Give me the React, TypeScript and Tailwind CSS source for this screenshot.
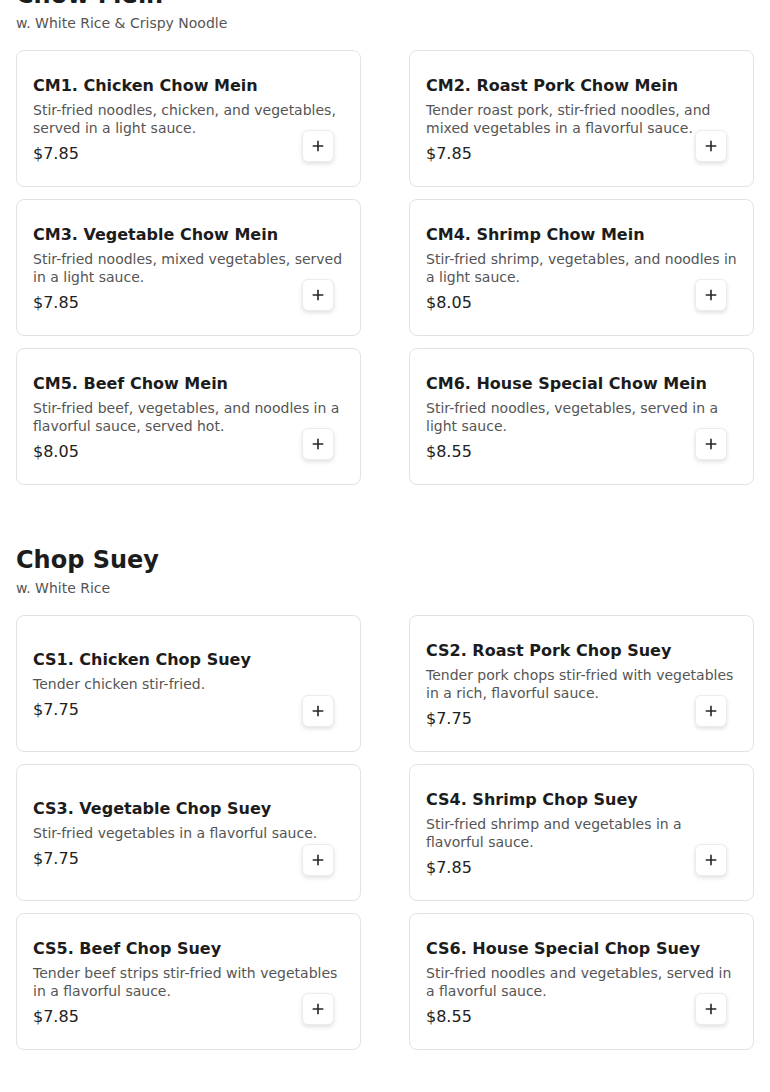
import React from "react";

type Item = { code: string; name: string; desc: string; price: string };

const chowMein: Item[] = [
  { code: "CM1", name: "Chicken Chow Mein", desc: "Stir-fried noodles, chicken, and vegetables, served in a light sauce.", price: "$7.85" },
  { code: "CM2", name: "Roast Pork Chow Mein", desc: "Tender roast pork, stir-fried noodles, and mixed vegetables in a flavorful sauce.", price: "$7.85" },
  { code: "CM3", name: "Vegetable Chow Mein", desc: "Stir-fried noodles, mixed vegetables, served in a light sauce.", price: "$7.85" },
  { code: "CM4", name: "Shrimp Chow Mein", desc: "Stir-fried shrimp, vegetables, and noodles in a light sauce.", price: "$8.05" },
  { code: "CM5", name: "Beef Chow Mein", desc: "Stir-fried beef, vegetables, and noodles in a flavorful sauce, served hot.", price: "$8.05" },
  { code: "CM6", name: "House Special Chow Mein", desc: "Stir-fried noodles, vegetables, served in a light sauce.", price: "$8.55" },
];

const chopSuey: Item[] = [
  { code: "CS1", name: "Chicken Chop Suey", desc: "Tender chicken stir-fried.", price: "$7.75" },
  { code: "CS2", name: "Roast Pork Chop Suey", desc: "Tender pork chops stir-fried with vegetables in a rich, flavorful sauce.", price: "$7.75" },
  { code: "CS3", name: "Vegetable Chop Suey", desc: "Stir-fried vegetables in a flavorful sauce.", price: "$7.75" },
  { code: "CS4", name: "Shrimp Chop Suey", desc: "Stir-fried shrimp and vegetables in a flavorful sauce.", price: "$7.85" },
  { code: "CS5", name: "Beef Chop Suey", desc: "Tender beef strips stir-fried with vegetables in a flavorful sauce.", price: "$7.85" },
  { code: "CS6", name: "House Special Chop Suey", desc: "Stir-fried noodles and vegetables, served in a flavorful sauce.", price: "$8.55" },
];

function PlusIcon() {
  return (
    <svg width="12" height="12" viewBox="0 0 12 12" fill="none">
      <path d="M6 1.5v9M1.5 6h9" stroke="#262626" strokeWidth="1.6" strokeLinecap="square" />
    </svg>
  );
}

function Card({ item }: { item: Item }) {
  return (
    <div className="relative h-[137px] rounded-lg border border-[#e3e3e3] bg-white pl-4 pr-[14px] pt-[2px] flex flex-col justify-center">
      <h3 className="text-base font-bold leading-6 text-[#1c1c1c]">
        {item.code}. {item.name}
      </h3>
      <p className="mt-[3px] text-sm leading-[18px] text-[#555555]">{item.desc}</p>
      <p className="mt-[5px] text-base leading-6 text-[#222222]">{item.price}</p>
      <button className="absolute right-[26px] bottom-6 flex h-8 w-8 items-center justify-center rounded-md border border-[#ececec] bg-white shadow-[0_2px_4px_rgba(0,0,0,0.12)]">
        <PlusIcon />
      </button>
    </div>
  );
}

function Section({ title, subtitle, items }: { title: string; subtitle: string; items: Item[] }) {
  return (
    <section>
      <h2 className="text-2xl font-bold leading-8 text-[#1c1c1c]">{title}</h2>
      <p className="mt-[2px] text-sm leading-5 text-[#555555]">{subtitle}</p>
      <div className="mt-[17px] grid grid-cols-2 gap-x-12 gap-y-3">
        {items.map((it) => (
          <Card key={it.code} item={it} />
        ))}
      </div>
    </section>
  );
}

export default function App() {
  return (
    <div
      className="min-h-[1092px] bg-white px-4"
      style={{ fontFamily: '"DejaVu Sans", sans-serif' }}
    >
      <div className="-mt-[21px] flex flex-col gap-[59px] pb-10">
        <Section title="Chow Mein" subtitle="w. White Rice & Crispy Noodle" items={chowMein} />
        <Section title="Chop Suey" subtitle="w. White Rice" items={chopSuey} />
      </div>
    </div>
  );
}
